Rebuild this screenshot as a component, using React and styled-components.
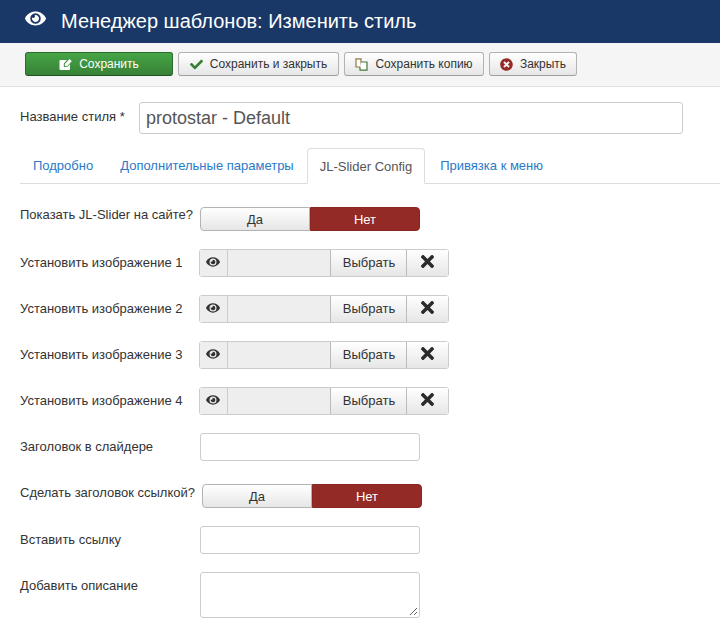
import styled, { createGlobalStyle } from "styled-components";
import { FaEye, FaCheck, FaTimes, FaTimesCircle } from "react-icons/fa";

const GlobalStyle = createGlobalStyle`
  html, body {
    margin: 0;
    padding: 0;
    background: #fff;
    overflow: hidden;
  }
  body {
    font-family: "Liberation Sans", Arial, sans-serif;
    font-size: 13px;
    color: #333;
  }
  * {
    box-sizing: border-box;
  }
`;

const Page = styled.div`
  width: 720px;
  height: 630px;
  overflow: hidden;
`;

const Header = styled.div`
  height: 43px;
  background: #1a3867;
  color: #fff;
  display: flex;
  align-items: center;
  padding: 0 0 1px 25px;
  font-size: 20px;
  gap: 15px;
  svg {
    width: 21px;
    height: 21px;
    margin-bottom: 5px;
  }
`;

const Toolbar = styled.div`
  height: 44px;
  background: #f5f5f5;
  border-bottom: 1px solid #e1e1e1;
  padding: 9px 0 0 25px;
  display: flex;
  gap: 5px;
  align-items: flex-start;
`;

const ToolButton = styled.div`
  height: 24px;
  width: ${(props) => props.$width}px;
  display: flex;
  align-items: center;
  justify-content: center;
  gap: 7px;
  font-size: 12px;
  border-radius: 3px;
  color: ${(props) => (props.$primary ? "#fff" : "#333")};
  background: ${(props) =>
    props.$primary
      ? "linear-gradient(#46a546, #378137)"
      : "linear-gradient(#fff, #e6e6e6)"};
  border: 1px solid ${(props) => (props.$primary ? "#2d6a2d" : "#b3b3b3")};
  border-bottom-color: ${(props) => (props.$primary ? "#225122" : "#a0a0a0")};
  svg {
    width: 13px;
    height: 13px;
    color: ${(props) => props.$iconColor || "#fff"};
  }
`;

const Content = styled.div`
  padding: 15px 0 0 20px;
`;

const TitleRow = styled.div`
  display: flex;
  align-items: flex-start;
`;

const TitleLabel = styled.div`
  width: 119px;
  padding-top: 7px;
  line-height: 16px;
`;

const TitleInput = styled.div`
  width: 544px;
  height: 32px;
  border: 1px solid #ccc;
  border-radius: 3px;
  padding: 0 6px;
  font-size: 18px;
  line-height: 30px;
  color: #555;
`;

const Tabs = styled.div`
  display: flex;
  height: 36px;
  margin-top: 14px;
  border-bottom: 1px solid #ddd;
`;

const Tab = styled.div`
  height: ${(props) => (props.$active ? "36px" : "35px")};
  padding: 0 ${(props) => (props.$active ? "12px" : "13px")};
  margin-right: ${(props) => props.$gap || 0}px;
  line-height: 35px;
  font-size: 13px;
  color: ${(props) => (props.$active ? "#555" : "#2a7ac8")};
  background: #fff;
  border: ${(props) => (props.$active ? "1px solid #ddd" : "none")};
  border-bottom: ${(props) => (props.$active ? "1px solid #fff" : "none")};
  border-radius: 4px 4px 0 0;
`;

const Form = styled.div`
  padding-top: 23px;
  display: flex;
  flex-direction: column;
`;

const Row = styled.div`
  display: flex;
  align-items: flex-start;
  height: ${(props) => props.$height}px;
  margin-bottom: ${(props) => props.$mb}px;
`;

const Label = styled.div`
  width: ${(props) => props.$width || 180}px;
  padding-top: ${(props) => props.$top ?? 6}px;
  line-height: 16px;
  white-space: nowrap;
  flex-shrink: 0;
`;

const Switcher = styled.div`
  width: 220px;
  height: 24px;
  display: flex;
`;

const SwitchOption = styled.div`
  flex: 1;
  display: flex;
  align-items: center;
  justify-content: center;
  font-size: 13px;
  color: ${(props) => (props.$on ? "#fff" : "#333")};
  background: ${(props) =>
    props.$on ? "#942a25" : "linear-gradient(#fff, #e6e6e6)"};
  border: 1px solid ${(props) => (props.$on ? "#8a2621" : "#b3b3b3")};
  border-radius: ${(props) => (props.$on ? "0 4px 4px 0" : "4px 0 0 4px")};
`;

const MediaField = styled.div`
  width: 250px;
  height: 28px;
  display: flex;
  border: 1px solid #ccc;
  border-radius: 3px;
`;

const MediaEye = styled.div`
  width: 28px;
  background: #eee;
  border-right: 1px solid #ccc;
  display: flex;
  justify-content: center;
  padding: 5px 2px 0 0;
  svg {
    width: 14px;
    height: 14px;
    color: #333;
  }
`;

const MediaPreview = styled.div`
  width: 102px;
  background: #eee;
`;

const MediaButton = styled.div`
  width: 76px;
  padding: 0 0 1px 1px;
  display: flex;
  align-items: center;
  justify-content: center;
  background: linear-gradient(#fff, #e6e6e6);
  border-left: 1px solid #bbb;
  font-size: 13px;
`;

const ClearButton = styled(MediaButton)`
  flex: 1;
  width: auto;
  padding: 0 1px 4px 0;
  svg {
    width: 19px;
    height: 19px;
    color: #2b2b2b;
  }
`;

const TextInput = styled.div`
  width: 220px;
  height: ${(props) => props.$height || 28}px;
  border: 1px solid #ccc;
  border-radius: 3px;
  background: #fff;
  position: relative;
`;

const Grip = styled.svg`
  position: absolute;
  right: 1px;
  bottom: 1px;
  width: 9px;
  height: 9px;
`;

const EditIcon = () => (
  <svg viewBox="0 0 13 13">
    <path d="M1.5 2 H8 L4.8 5.4 V9 H8.2 L11 6.2 V11 a1 1 0 0 1 -1 1 H1.5 a1 1 0 0 1 -1 -1 V3 a1 1 0 0 1 1 -1 z" fill="#fff" />
    <path d="M5.8 6 L10.5 1 L12.8 3.3 L8 8.2 H5.8 z" fill="#fff" />
  </svg>
);

const CopyIcon = () => (
  <svg viewBox="0 0 13 13" fill="none" strokeWidth="1.2">
    <path d="M1 .8 H6 V9 H1 z" stroke="#8a7a45" fill="#fff" />
    <path d="M6 4 H12 V12.2 H5 V9" stroke="#46763a" fill="#fff" />
  </svg>
);

const images = [1, 2, 3, 4];

export default function App() {
  return (
    <Page>
      <GlobalStyle />
      <Header>
        <FaEye />
        <span>Менеджер шаблонов: Изменить стиль</span>
      </Header>
      <Toolbar>
        <ToolButton $primary $width={148}>
          <EditIcon />
          Сохранить
        </ToolButton>
        <ToolButton $width={161} $iconColor="#378137">
          <FaCheck />
          Сохранить и закрыть
        </ToolButton>
        <ToolButton $width={140}>
          <CopyIcon />
          Сохранить копию
        </ToolButton>
        <ToolButton $width={88} $iconColor="#942a25">
          <FaTimesCircle />
          Закрыть
        </ToolButton>
      </Toolbar>
      <Content>
        <TitleRow>
          <TitleLabel>Название стиля *</TitleLabel>
          <TitleInput>protostar - Default</TitleInput>
        </TitleRow>
        <Tabs>
          <Tab $gap={1}>Подробно</Tab>
          <Tab>Дополнительные параметры</Tab>
          <Tab $active $gap={2}>
            JL-Slider Config
          </Tab>
          <Tab>Привязка к меню</Tab>
        </Tabs>
        <Form>
          <Row $height={24} $mb={18}>
            <Label $top={0}>Показать JL-Slider на сайте?</Label>
            <Switcher>
              <SwitchOption>Да</SwitchOption>
              <SwitchOption $on>Нет</SwitchOption>
            </Switcher>
          </Row>
          {images.map((n) => (
            <Row key={n} $height={28} $mb={18}>
              <Label $width={179}>Установить изображение {n}</Label>
              <MediaField>
                <MediaEye>
                  <FaEye />
                </MediaEye>
                <MediaPreview />
                <MediaButton>Выбрать</MediaButton>
                <ClearButton>
                  <FaTimes />
                </ClearButton>
              </MediaField>
            </Row>
          ))}
          <Row $height={28} $mb={23}>
            <Label>Заголовок в слайдере</Label>
            <TextInput />
          </Row>
          <Row $height={24} $mb={18}>
            <Label $width={182} $top={1}>
              Сделать заголовок ссылкой?
            </Label>
            <Switcher>
              <SwitchOption>Да</SwitchOption>
              <SwitchOption $on>Нет</SwitchOption>
            </Switcher>
          </Row>
          <Row $height={28} $mb={18}>
            <Label>Вставить ссылку</Label>
            <TextInput />
          </Row>
          <Row $height={46} $mb={0}>
            <Label>Добавить описание</Label>
            <TextInput $height={46}>
              <Grip viewBox="0 0 9 9">
                <path d="M1 8 L8 1 M5 8 L8 5" stroke="#666" strokeWidth="1" fill="none" />
              </Grip>
            </TextInput>
          </Row>
        </Form>
      </Content>
    </Page>
  );
}
